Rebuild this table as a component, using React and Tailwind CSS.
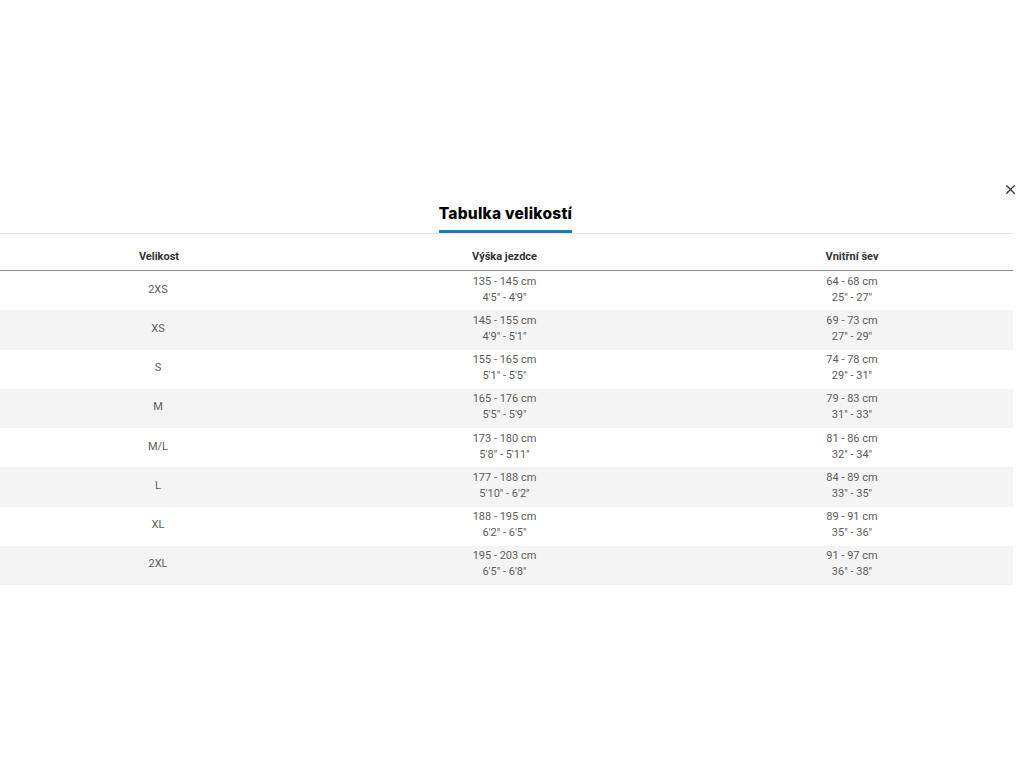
import { X } from "lucide-react";

const rows = [
    { size: "2XS", cm: "135 - 145 cm", ft: "4'5\" - 4'9\"", seamCm: "64 - 68 cm", seamIn: "25\" - 27\"" },
    { size: "XS", cm: "145 - 155 cm", ft: "4'9\" - 5'1\"", seamCm: "69 - 73 cm", seamIn: "27\" - 29\"" },
    { size: "S", cm: "155 - 165 cm", ft: "5'1\" - 5'5\"", seamCm: "74 - 78 cm", seamIn: "29\" - 31\"" },
    { size: "M", cm: "165 - 176 cm", ft: "5'5\" - 5'9\"", seamCm: "79 - 83 cm", seamIn: "31\" - 33\"" },
    { size: "M/L", cm: "173 - 180 cm", ft: "5'8\" - 5'11\"", seamCm: "81 - 86 cm", seamIn: "32\" - 34\"" },
    { size: "L", cm: "177 - 188 cm", ft: "5'10\" - 6'2\"", seamCm: "84 - 89 cm", seamIn: "33\" - 35\"" },
    { size: "XL", cm: "188 - 195 cm", ft: "6'2\" - 6'5\"", seamCm: "89 - 91 cm", seamIn: "35\" - 36\"" },
    { size: "2XL", cm: "195 - 203 cm", ft: "6'5\" - 6'8\"", seamCm: "91 - 97 cm", seamIn: "36\" - 38\"" },
];

export default function App() {
    return (
        <div className="min-h-[768px] w-[1024px] bg-white font-['Roboto',sans-serif]">
            <div className="relative w-[1013px] pt-[204px]">
                <button className="absolute right-[-5px] top-[182px] text-[#333]">
                    <X size={15} strokeWidth={2} />
                </button>

                {/* titre + onglet */}
                <div className="flex justify-center border-b border-[#e6e6e6]">
                    <h2 className="border-b-[3px] border-[#1b7dc0] pb-[6px] text-[15.5px] font-extrabold leading-[20px] tracking-[0.25px] text-black font-['Inter',sans-serif] translate-x-[-1px]">
                        Tabulka velikostí
                    </h2>
                </div>

                <div className="grid grid-cols-[318px_373px_322px] border-b border-[#8a8a8a] text-[11px] font-bold text-[#333]">
                    <div className="flex h-[36px] items-center justify-center pt-[10px]">Velikost</div>
                    <div className="flex h-[36px] items-center justify-center pt-[10px]">Výška jezdce</div>
                    <div className="flex h-[36px] items-center justify-center pt-[10px]">Vnitřní šev</div>
                </div>

                {rows.map((row, i) => (
                    <div
                        key={row.size}
                        className={
                            i % 2 === 1
                                ? "grid h-[39.25px] grid-cols-[318px_373px_322px] bg-[#f4f4f4] pb-[2px] text-[11px] leading-[16px] text-[#5c5c5c]"
                                : "grid h-[39.25px] grid-cols-[318px_373px_322px] bg-white pb-[2px] text-[11px] leading-[16px] text-[#5c5c5c]"
                        }
                    >
                        <div className="flex items-center justify-center pr-[2px]">{row.size}</div>
                        <div className="flex flex-col items-center justify-center">
                            <span>{row.cm}</span>
                            <span>{row.ft}</span>
                        </div>
                        <div className="flex flex-col items-center justify-center">
                            <span>{row.seamCm}</span>
                            <span>{row.seamIn}</span>
                        </div>
                    </div>
                ))}
            </div>
        </div>
    );
}
